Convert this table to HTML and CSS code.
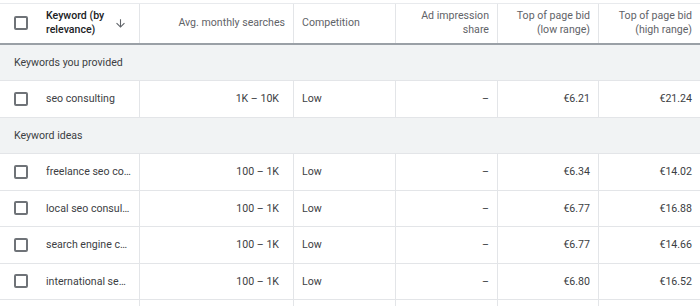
FILE: index.html
```html
<!DOCTYPE html>
<html lang="en">
<head>
    <meta charset="UTF-8">
    <title>Keyword ideas</title>
    <link rel="stylesheet" href="styles.css">
</head>
<body>
    <div class="kw-table">
        <div class="row head">
            <div class="cell kw">
                <span class="box"></span>
                <span class="head-title">Keyword (by relevance)</span>
                <svg class="sort" viewBox="0 0 24 24" width="13" height="13"><path d="M20 12l-1.41-1.41L13 16.17V4h-2v12.17l-5.58-5.59L4 12l8 8 8-8z"/></svg>
            </div>
            <div class="cell num">Avg. monthly searches</div>
            <div class="cell">Competition</div>
            <div class="cell num">Ad impression share</div>
            <div class="cell num">Top of page bid (low range)</div>
            <div class="cell num">Top of page bid (high range)</div>
        </div>

        <div class="row group"><div class="cell">Keywords you provided</div></div>
        <div class="row">
            <div class="cell kw"><span class="box"></span><span class="kw-text">seo consulting</span></div>
            <div class="cell num vol">1K – 10K</div>
            <div class="cell">Low</div>
            <div class="cell num">–</div>
            <div class="cell num">€6.21</div>
            <div class="cell num">€21.24</div>
        </div>

        <div class="row group"><div class="cell">Keyword ideas</div></div>
        <div class="row">
            <div class="cell kw"><span class="box"></span><span class="kw-text">freelance seo consultant</span></div>
            <div class="cell num vol">100 – 1K</div>
            <div class="cell">Low</div>
            <div class="cell num">–</div>
            <div class="cell num">€6.34</div>
            <div class="cell num">€14.02</div>
        </div>
        <div class="row">
            <div class="cell kw"><span class="box"></span><span class="kw-text">local seo consultant</span></div>
            <div class="cell num vol">100 – 1K</div>
            <div class="cell">Low</div>
            <div class="cell num">–</div>
            <div class="cell num">€6.77</div>
            <div class="cell num">€16.88</div>
        </div>
        <div class="row">
            <div class="cell kw"><span class="box"></span><span class="kw-text">search engine consultant</span></div>
            <div class="cell num vol">100 – 1K</div>
            <div class="cell">Low</div>
            <div class="cell num">–</div>
            <div class="cell num">€6.77</div>
            <div class="cell num">€14.66</div>
        </div>
        <div class="row">
            <div class="cell kw"><span class="box"></span><span class="kw-text">international seo consultant</span></div>
            <div class="cell num vol">100 – 1K</div>
            <div class="cell">Low</div>
            <div class="cell num">–</div>
            <div class="cell num">€6.80</div>
            <div class="cell num">€16.52</div>
        </div>
        <div class="row">
            <div class="cell kw"><span class="box"></span><span class="kw-text">seo consultant near me</span></div>
            <div class="cell num vol">100 – 1K</div>
            <div class="cell">Medium</div>
            <div class="cell num">–</div>
            <div class="cell num">€7.12</div>
            <div class="cell num">€18.40</div>
        </div>
    </div>
</body>
</html>
```

FILE: styles.css
```css
* {
    margin: 0;
    padding: 0;
    box-sizing: border-box;
}

body {
    background-color: #fff;
    font-family: Roboto, Arial, sans-serif;
    font-size: 10.6px;
    color: #3c4043;
}

.kw-table {
    margin-top: 3px;
    border-top: 1px solid #e8eaed;
}

.row {
    display: grid;
    grid-template-columns: 139px 154px 102px 102px 101px 102px;
    height: 36.5px;
    border-bottom: 1px solid #e3e5e8;
}

.cell {
    display: flex;
    align-items: center;
    padding: 0 8px;
    border-left: 1px solid #e3e5e8;
    white-space: nowrap;
    overflow: hidden;
}

.cell:first-child {
    border-left: none;
}

.num {
    justify-content: flex-end;
    text-align: right;
}

.vol {
    padding-right: 14px;
}

/* header */
.head {
    height: 40.5px;
    border-bottom: 2px solid #9aa0a6;
    color: #5f6368;
}

.head .cell {
    white-space: normal;
    line-height: 14px;
}

.head-title {
    flex: 1;
    font-weight: 500;
    color: #202124;
    padding-right: 4px;
}

.sort {
    fill: #5f6368;
    flex-shrink: 0;
    margin-right: 5px;
}

/* keyword column */
.kw {
    padding-left: 14px;
    padding-right: 8px;
}

.head .kw {
    padding-right: 7px;
}

.box {
    width: 14px;
    height: 14px;
    border: 2px solid #6f7378;
    border-radius: 2px;
    flex-shrink: 0;
    margin-right: 18px;
}

.kw-text {
    overflow: hidden;
    text-overflow: ellipsis;
}

/* group rows */
.group {
    display: flex;
    background-color: #f1f3f4;
}

.group .cell {
    padding-left: 14px;
    border-left: none;
}
```
